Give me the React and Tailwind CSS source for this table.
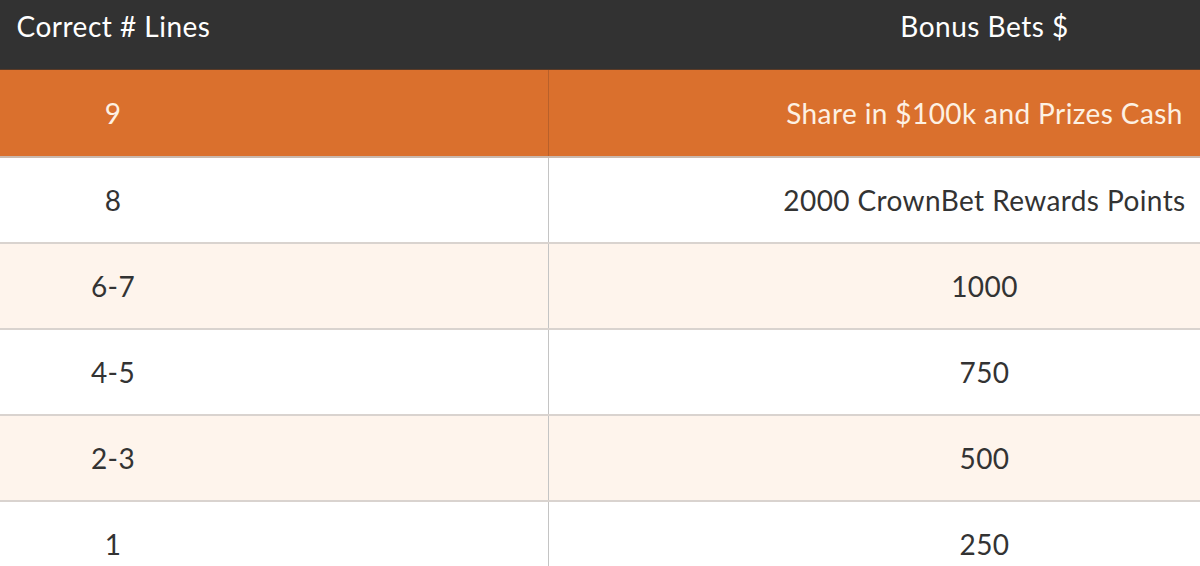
const data = [
    { lines: '8', bonus: '2000 CrownBet Rewards Points', bg: 'bg-white' },
    { lines: '6-7', bonus: '1000', bg: 'bg-[#fef4ec]' },
    { lines: '4-5', bonus: '750', bg: 'bg-white' },
    { lines: '2-3', bonus: '500', bg: 'bg-[#fef4ec]' },
    { lines: '1', bonus: '250', bg: 'bg-white' },
];

export default function App() {
    return (
        <div className="w-[1200px] h-[566px] overflow-hidden bg-white" style={{ fontFamily: 'Lato, "Open Sans", sans-serif' }}>
            <div className="w-[1742px] -ml-[322px]">
                {/* Header */}
                <div className="grid grid-cols-2 h-[70px] bg-[#323232] border-b border-[#5a3a26] text-white text-[28px] tracking-[0.5px] leading-none">
                    <div className="flex justify-center pt-[12px]">Correct # Lines</div>
                    <div className="flex justify-center pt-[12px]">Bonus Bets $</div>
                </div>

                {/* Top prize */}
                <div className="grid grid-cols-2 h-[88px] bg-[#da702d] border-b-2 border-[#c9b9ae] text-[#fdf1e3] text-[28px] tracking-[0.4px]">
                    <div className="flex items-center justify-center border-r border-[#b8602a]">9</div>
                    <div className="flex items-center justify-center">Share in $100k and Prizes Cash</div>
                </div>

                {data.map((row) => (
                    <div key={row.lines} className={`grid grid-cols-2 h-[86px] border-b-2 border-[#d9d3cf] text-[#333333] text-[28px] tracking-[0.4px] ${row.bg}`}>
                        <div className="flex items-center justify-center border-r border-[#c4c4c4]">{row.lines}</div>
                        <div className="flex items-center justify-center">{row.bonus}</div>
                    </div>
                ))}
            </div>
        </div>
    );
}
